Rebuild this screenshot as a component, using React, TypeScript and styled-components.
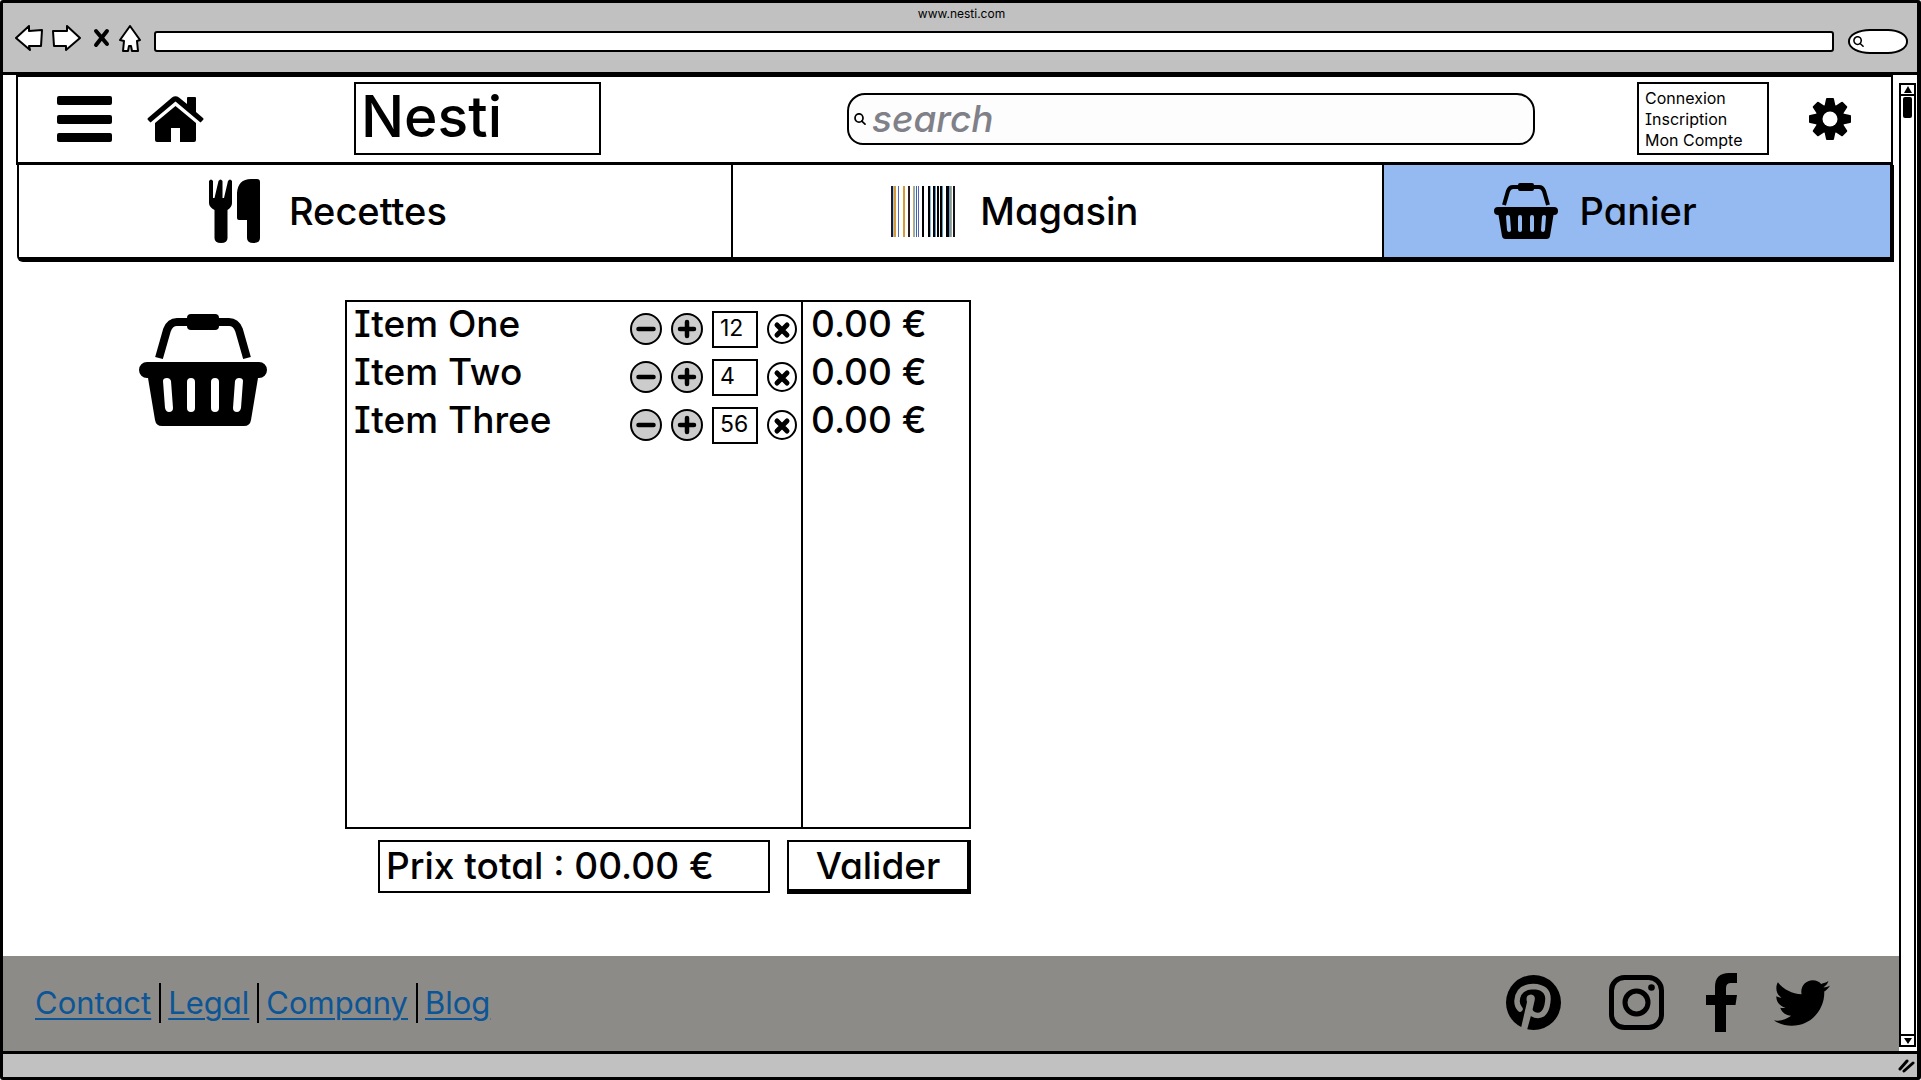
import React, { useState } from "react";
import styled, { createGlobalStyle, css } from "styled-components";
import { FaTwitter } from "react-icons/fa";

const GlobalStyle = createGlobalStyle`
  *, *::before, *::after { box-sizing: border-box; }
  body { margin: 0; background: #fff; }
  body, button, input {
    font-family: Inter, "Noto Sans", sans-serif;
    font-feature-settings: "cv08", "cv11";
    color: #000;
  }
  button { padding: 0; border: 0; background: none; cursor: pointer; }
  svg { display: block; }
`;

/* ---------- browser window ---------- */

const Window = styled.div`
  min-height: 100vh;
  display: flex;
  flex-direction: column;
  border: 3px solid #000;
  border-right-width: 4px;
  border-radius: 3px;
`;

const Chrome = styled.div`
  height: 72px;
  padding: 4px 9px 0 12px;
  background: #c1c1c1;
  border-bottom: 3px solid #000;
`;

const WindowTitle = styled.div`
  height: 16px;
  text-align: center;
  font-size: 12px;
  line-height: 14px;
`;

const Toolbar = styled.div`
  display: flex;
  align-items: center;
  height: 30px;
`;

const ToolButton = styled.button<{ $width: number; $gap: number }>`
  flex: none;
  width: ${(p) => p.$width}px;
  margin-right: ${(p) => p.$gap}px;
`;

const AddressBar = styled.input`
  flex: 1;
  min-width: 0;
  height: 21px;
  margin-top: 6px;
  padding: 0 6px;
  border: 2px solid #000;
  border-radius: 3px;
  background: #fff;
  font-size: 12px;
`;

const QuickSearch = styled.label`
  display: flex;
  align-items: center;
  flex: none;
  width: 60px;
  height: 25px;
  margin: 6px 0 0 14px;
  padding-left: 3px;
  border: 2px solid #000;
  border-radius: 22px 20px 20px 22px / 12px;
  background: #fff;
  input { width: 36px; border: 0; padding: 0; background: none; font-size: 12px; }
`;

const Viewport = styled.div`
  flex: 1;
  display: flex;
`;

const Page = styled.div`
  flex: 1;
  min-width: 0;
  display: flex;
  flex-direction: column;
`;

const ScrollBar = styled.div`
  display: flex;
  flex-direction: column;
  width: 17px;
  margin: 8px 1px 4px 0;
  border: 2px solid #000;
`;

const ScrollButton = styled.button<{ $end?: boolean }>`
  height: 11px;
  display: flex;
  align-items: center;
  justify-content: center;
  ${(p) => (p.$end ? css`border-top: 2px solid #000; margin-top: auto;` : css`border-bottom: 2px solid #000;`)}
`;

const ScrollThumb = styled.div`
  width: 9px;
  height: 21px;
  margin: 1px auto;
  border-radius: 2px;
  background: #000;
`;

const StatusBar = styled.div`
  display: flex;
  justify-content: flex-end;
  align-items: center;
  height: 26px;
  padding-right: 2px;
  background: #c1c1c1;
  border-top: 3px solid #000;
`;

/* ---------- site header ---------- */

const Header = styled.header`
  display: flex;
  align-items: center;
  height: 90px;
  margin: 0 6px 0 13px;
  padding: 0 40px 2px 39px;
  border: 2px solid #000;
  border-bottom-width: 3px;
`;

const IconButton = styled.button<{ $gap?: number }>`
  flex: none;
  margin-right: ${(p) => p.$gap ?? 0}px;
`;

const Brand = styled.a`
  flex: none;
  width: 247px;
  height: 73px;
  padding-left: 5px;
  border: 2px solid #000;
  color: #000;
  font-size: 57px;
  font-weight: 500;
  line-height: 66px;
  text-decoration: none;
`;

const SearchBox = styled.label`
  display: flex;
  align-items: center;
  gap: 6px;
  flex: 1;
  min-width: 0;
  height: 52px;
  margin: 0 102px 0 246px;
  padding: 0 16px 0 5px;
  border: 2px solid #000;
  border-radius: 18px 18px 16px 16px;
  background: #fdfdfd;
  svg { flex: none; }
  input {
    flex: 1;
    min-width: 0;
    border: 0;
    padding: 0;
    background: none;
    font-size: 37px;
    font-weight: 500;
    font-style: italic;
    line-height: 44px;
    outline: none;
  }
  input::placeholder { color: #808089; opacity: 1; }
`;

const Account = styled.nav`
  display: flex;
  flex-direction: column;
  flex: none;
  width: 132px;
  height: 73px;
  margin-right: 40px;
  padding: 4px 0 0 6px;
  border: 2px solid #000;
  a {
    color: #000;
    font-size: 16px;
    line-height: 21px;
    text-decoration: none;
  }
`;

const Tabs = styled.nav`
  display: grid;
  grid-template-columns: 713fr 651fr 509fr;
  height: 97px;
  margin: 0 5px 0 14px;
  border: solid #000;
  border-width: 0 4px 5px 2px;
  border-bottom-left-radius: 6px;
`;

const Tab = styled.a<{ $active?: boolean; $gap: number; $start: number }>`
  display: flex;
  align-items: center;
  gap: ${(p) => p.$gap}px;
  padding-left: ${(p) => p.$start}px;
  background: ${(p) => (p.$active ? "#94baf1" : "#fff")};
  color: #000;
  font-size: 38px;
  font-weight: 500;
  text-decoration: none;
  & + & { border-left: 2px solid #000; }
`;

/* ---------- cart ---------- */

const Main = styled.main`
  display: flex;
  align-items: flex-start;
  flex: 1;
  padding: 38px 0 60px 136px;
`;

const CartIcon = styled.div`
  flex: none;
  width: 128px;
  margin: 14px 78px 0 0;
`;

const Cart = styled.form`
  width: 626px;
`;

const CartTable = styled.table`
  width: 100%;
  height: 529px;
  table-layout: fixed;
  border-collapse: separate;
  border-spacing: 0;
  border: 2px solid #000;
  font-size: 37px;
  font-weight: 500;
  line-height: 42px;
  th, td { padding: 0; text-align: left; font-weight: 500; }
`;

const NameColumn = styled.col``;
const ControlColumn = styled.col`width: 171px;`;
const PriceColumn = styled.col`width: 168px;`;

const ItemRow = styled.tr`
  height: 48px;
  && th { padding: 0 0 4px 7px; }
`;

const PriceCell = styled.td`
  border-left: 2px solid #000;
  && { padding: 0 0 4px 8px; }
`;

const Controls = styled.div`
  display: flex;
  align-items: center;
  gap: 9px;
  padding-top: 6px;
`;

const RoundButton = styled.button<{ $plain?: boolean }>`
  display: flex;
  align-items: center;
  justify-content: center;
  flex: none;
  width: ${(p) => (p.$plain ? 30 : 32)}px;
  height: ${(p) => (p.$plain ? 30 : 32)}px;
  border: 2px solid #000;
  border-radius: 50%;
  background: ${(p) => (p.$plain ? "#fff" : "#ccc")};
`;

const Quantity = styled.input`
  width: 46px;
  height: 37px;
  padding: 0 0 3px 6px;
  border: 2px solid #000;
  background: #fff;
  font-size: 23px;
`;

const Summary = styled.div`
  display: flex;
  justify-content: space-between;
  margin-top: 11px;
  padding-left: 33px;
`;

const Total = styled.output`
  width: 392px;
  height: 53px;
  padding-left: 6px;
  border: 2px solid #000;
  font-size: 37px;
  font-weight: 500;
  line-height: 48px;
`;

const Submit = styled.button`
  width: 184px;
  height: 54px;
  padding-bottom: 1px;
  border: solid #000;
  border-width: 2px 4px 5px 2px;
  font-size: 37px;
  font-weight: 500;
`;

/* ---------- footer ---------- */

const Footer = styled.footer`
  display: flex;
  align-items: center;
  justify-content: space-between;
  height: 95px;
  padding: 0 69px 2px 32px;
  background: #8d8b88;
`;

const FooterLinks = styled.nav`
  display: flex;
  align-items: center;
  a {
    color: #0c5596;
    font-size: 31px;
    line-height: 40px;
    text-decoration: underline;
    text-decoration-thickness: 2px;
    text-underline-offset: 4px;
  }
  a + a {
    margin-left: 8px;
    padding-left: 7px;
    border-left: 2px solid #000;
  }
`;

const Social = styled.div`
  display: flex;
  align-items: center;
  a { color: #000; }
`;

const SocialLink = styled.a<{ $gap?: number }>`
  margin-right: ${(p) => p.$gap ?? 0}px;
`;

/* ---------- drawings ---------- */

const Lens = ({ size }: { size: number }) => (
  <svg width={size} height={size} viewBox="0 0 12 12" fill="none" stroke="#000" strokeWidth="1.7" strokeLinecap="round">
    <ellipse cx="5" cy="5" rx="4" ry="4.2" />
    <path d="M7.8 8.2 11 11.2" />
  </svg>
);

const Basket = ({ width }: { width: number }) => (
  <svg width={width} viewBox="0 0 128 112">
    <path d="M20 44 28 16Q31 8 38 8H90Q97 8 100 16L108 44" fill="none" stroke="#000" strokeWidth="8" />
    <rect x="48" y="0" width="32" height="16" rx="4" />
    <path fillRule="evenodd" d="M8 48H120A8 8 0 0 1 120 64H119L112 106Q111 112 105 112H23Q17 112 16 106L9 64H8A8 8 0 0 1 8 48ZM24 67 26 94Q27 98 30 98 34 98 34 94L32 67Q31 64 28 64 24 64 24 67ZM48 68V94Q48 98 52 98T56 94V68Q56 64 52 64T48 68ZM72 68V94Q72 98 76 98T80 94V68Q80 64 76 64T72 68ZM96 67 94 94Q94 98 98 98 101 98 102 94L104 67Q104 64 100 64 97 64 96 67Z" />
  </svg>
);

const Home = () => (
  <svg width="57" height="46" viewBox="0 0 57 46">
    <path d="M1 22 25 1.500Q28.500-1 32 1.500L40 8V2Q40 1 41 1H48Q49 1 49 2V16L56 22Q57 23 56 24L53.500 26.500 28.500 5.500 3.500 26.500 1 24Q0 23 1 22Z" />
    <path d="M28.500 10 49 27V44Q49 46 47 46H33V32H24V46H10Q8 46 8 44V27Z" />
  </svg>
);

const Cutlery = () => (
  <svg width="51" height="64" viewBox="0 0 51 64">
    <path d="M0 2Q2-1 4 2V19H5.500L9.500 2Q11.500-1 13.500 2V19H15L19 2Q21-1 23 2V24Q23 28 18.500 31V59Q18.500 64 12 64T5.500 59V31Q0 28 0 24Z" />
    <path d="M48 0Q51 0 51 3V59Q51 64 44.500 64T38 59V41H30Q28 41 28 39V14Q29 0 42 0Z" />
  </svg>
);

const bars: [number, number, string][] = [
  [0, 2, "#201820"], [2, 1, "#9cc4e4"], [3, 2, "#d59a3c"], [7, 1, "#5068b8"], [12, 2, "#d59a3c"],
  [17, 2, "#2c1c20"], [22, 1, "#c9a56a"], [23, 1, "#7cb0d8"], [25, 1, "#3f62a8"], [27, 1, "#5a60b0"],
  [31, 2, "#000"], [37, 2, "#000"], [39, 1, "#7cb8d8"], [42, 2, "#000"], [44, 1, "#4f9cc8"],
  [46, 2, "#000"], [49, 2, "#000"], [51, 1, "#4f9cc8"], [55, 3, "#000"], [58, 2, "#62a0d0"],
  [60, 1, "#c9a56a"], [62, 2, "#141018"],
];

const Barcode = () => (
  <svg width="64" height="51" viewBox="0 0 64 51" shapeRendering="crispEdges">
    {bars.map(([x, w, fill]) => (
      <rect key={x} x={x} y="0" width={w} height="51" fill={fill} />
    ))}
  </svg>
);

const Gear = () => (
  <svg width="42" height="42" viewBox="-21 -21 42 42">
    {[0, 45, 90, 135].map((angle) => (
      <path key={angle} transform={`rotate(${angle})`} d="M-4-20Q-4-21-3-21H3Q4-21 4-20L5.500-13V13L4 20Q4 21 3 21H-3Q-4 21-4 20L-5.500 13V-13Z" />
    ))}
    <circle r="14.5" />
    <circle r="7.5" fill="#fff" />
  </svg>
);

const Pinterest = () => (
  <svg width="55" height="55" viewBox="0 0 55 55" fill="none" stroke="#8d8b88" strokeLinecap="round" strokeLinejoin="round">
    <circle cx="27.5" cy="27.5" r="27.5" fill="#000" stroke="none" />
    <path strokeWidth="5.5" d="M14 34Q11 31 11 26 12 12 27 11.500 42 12 42 24 41 40 32 40.500 27 40.500 24 36" />
    <path fill="#8d8b88" stroke="none" d="M15 53 21 27Q19 20 25 19.500 30 20 28.500 26L26 37 21 55Z" />
  </svg>
);

const Instagram = () => (
  <svg width="55" height="55" viewBox="0 0 55 55" fill="none" stroke="#000" strokeWidth="5">
    <rect x="2.5" y="2.5" width="50" height="50" rx="13" />
    <circle cx="27.5" cy="27.5" r="11.5" />
    <circle cx="42.5" cy="12.5" r="3.3" fill="#000" stroke="none" />
  </svg>
);

const Facebook = () => (
  <svg width="31" height="59" viewBox="0 0 31 59">
    <path d="M31 0V10H25Q20 10 20 15V22H31L29.500 32H20V59H9V32H0V22H9V14Q9 0 23 0Z" />
  </svg>
);

const Glyph = ({ kind }: { kind: "minus" | "plus" | "times" }) => (
  <svg width="20" height="20" viewBox="-10 -10 20 20" stroke="#000" strokeLinecap="round" strokeWidth={kind === "times" ? 5 : 4.5}>
    {kind === "times" ? <path d="M-5-4 5 6M5-4-5 6" /> : <path d={kind === "plus" ? "M-7 0H7M0-7V7" : "M-7.500 0H7.500"} />}
  </svg>
);

const outline = { fill: "#fff", stroke: "#000", strokeWidth: 2, strokeLinejoin: "round" as const };

/* ---------- page ---------- */

export default function App() {
  const [items, setItems] = useState([
    { name: "Item One", quantity: 12 },
    { name: "Item Two", quantity: 4 },
    { name: "Item Three", quantity: 56 },
  ]);

  const change = (index: number, quantity: number) =>
    setItems(items.map((item, i) => (i === index ? { ...item, quantity: Math.max(0, quantity) } : item)));

  return (
    <Window>
      <GlobalStyle />
      <Chrome>
        <WindowTitle>www.nesti.com</WindowTitle>
        <Toolbar>
          <ToolButton $width={28} $gap={9} aria-label="Back">
            <svg width="28" height="26" viewBox="0 0 28 26"><path {...outline} d="M1 13 14 1V6L27 5 26 21H14L15 25Z" /></svg>
          </ToolButton>
          <ToolButton $width={29} $gap={12} aria-label="Forward">
            <svg width="29" height="26" viewBox="0 0 29 26"><path {...outline} d="M28 13 15 1V6L1 6 2 21H14V25Z" /></svg>
          </ToolButton>
          <ToolButton $width={17} $gap={9} aria-label="Stop">
            <svg width="17" height="20" viewBox="0 0 17 20" stroke="#000" strokeWidth="4" strokeLinecap="round"><path d="M3 3 14 16M14 3 3 17" /></svg>
          </ToolButton>
          <ToolButton $width={22} $gap={13} aria-label="Home page">
            <svg width="22" height="27" viewBox="0 0 22 27"><path {...outline} d="M11 1 21 15 18 16 19 26H13L12 21H10L9 26H4L5 16 1 15Z" /></svg>
          </ToolButton>
          <AddressBar aria-label="Address" />
          <QuickSearch>
            <Lens size={11} />
            <input aria-label="Quick search" />
          </QuickSearch>
        </Toolbar>
      </Chrome>

      <Viewport>
        <Page>
          <Header>
            <IconButton $gap={35} aria-label="Menu">
              <svg width="55" height="46" viewBox="0 0 55 46"><rect width="55" height="9" rx="2" /><rect y="19" width="55" height="9" rx="2" /><rect y="37" width="55" height="9" rx="2" /></svg>
            </IconButton>
            <IconButton $gap={150} aria-label="Home"><Home /></IconButton>
            <Brand href="#">Nesti</Brand>
            <SearchBox>
              <Lens size={12} />
              <input type="search" placeholder="search" aria-label="search" />
            </SearchBox>
            <Account>
              <a href="#">Connexion</a>
              <a href="#">Inscription</a>
              <a href="#">Mon Compte</a>
            </Account>
            <IconButton aria-label="Settings"><Gear /></IconButton>
          </Header>

          <Tabs>
            <Tab href="#" $start={190} $gap={29}><Cutlery />Recettes</Tab>
            <Tab href="#" $start={158} $gap={25}><Barcode />Magasin</Tab>
            <Tab href="#" $start={110} $gap={22} $active><Basket width={64} />Panier</Tab>
          </Tabs>

          <Main>
            <CartIcon><Basket width={128} /></CartIcon>
            <Cart onSubmit={(e) => e.preventDefault()}>
              <CartTable>
                <colgroup>
                  <NameColumn />
                  <ControlColumn />
                  <PriceColumn />
                </colgroup>
                <tbody>
                  {items.map((item, i) => (
                    <ItemRow key={item.name}>
                      <th scope="row">{item.name}</th>
                      <td>
                        <Controls>
                          <RoundButton type="button" aria-label="Less" onClick={() => change(i, item.quantity - 1)}><Glyph kind="minus" /></RoundButton>
                          <RoundButton type="button" aria-label="More" onClick={() => change(i, item.quantity + 1)}><Glyph kind="plus" /></RoundButton>
                          <Quantity aria-label={`${item.name} quantity`} value={item.quantity} onChange={(e) => change(i, Number(e.target.value) || 0)} />
                          <RoundButton type="button" $plain aria-label="Remove" onClick={() => setItems(items.filter((_, n) => n !== i))}><Glyph kind="times" /></RoundButton>
                        </Controls>
                      </td>
                      <PriceCell>0.00 €</PriceCell>
                    </ItemRow>
                  ))}
                  <tr>
                    <td colSpan={2} />
                    <PriceCell />
                  </tr>
                </tbody>
              </CartTable>
              <Summary>
                <Total>Prix total : 00.00 €</Total>
                <Submit type="submit">Valider</Submit>
              </Summary>
            </Cart>
          </Main>

          <Footer>
            <FooterLinks>
              <a href="#">Contact</a>
              <a href="#">Legal</a>
              <a href="#">Company</a>
              <a href="#">Blog</a>
            </FooterLinks>
            <Social>
              <SocialLink $gap={48} href="#" aria-label="Pinterest"><Pinterest /></SocialLink>
              <SocialLink $gap={42} href="#" aria-label="Instagram"><Instagram /></SocialLink>
              <SocialLink $gap={37} href="#" aria-label="Facebook"><Facebook /></SocialLink>
              <SocialLink href="#" aria-label="Twitter"><FaTwitter size={56} /></SocialLink>
            </Social>
          </Footer>
        </Page>

        <ScrollBar>
          <ScrollButton aria-label="Scroll up"><svg width="8" height="7"><path d="M4 0 8 7H0Z" /></svg></ScrollButton>
          <ScrollThumb />
          <ScrollButton $end aria-label="Scroll down"><svg width="8" height="6"><path d="M0 0H8L4 6Z" /></svg></ScrollButton>
        </ScrollBar>
      </Viewport>

      <StatusBar>
        <svg width="17" height="14" viewBox="0 0 17 14" stroke="#000" strokeWidth="3" strokeLinecap="round"><path d="M2 10 9 2M6 12 15 4" /></svg>
      </StatusBar>
    </Window>
  );
}
